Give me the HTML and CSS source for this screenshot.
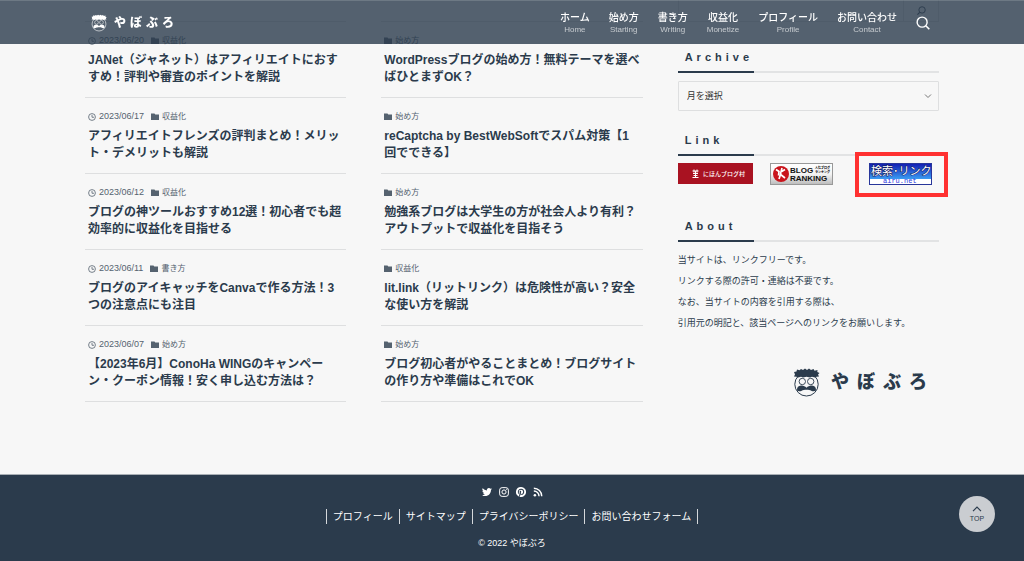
FILE: index.html
```html
<!DOCTYPE html>
<html lang="ja">
<head>
<meta charset="utf-8">
<meta name="viewport" content="width=device-width, initial-scale=1">
<title>やぼぶろ</title>
<link rel="stylesheet" href="styles.css">
</head>
<body>
<svg class="sprite" aria-hidden="true">
  <symbol id="clock" viewBox="0 0 16 16"><circle cx="8" cy="8" r="6.8" fill="none" stroke="currentColor" stroke-width="1.6"/><path d="M8 4v4.500h4" fill="none" stroke="currentColor" stroke-width="1.6"/></symbol>
  <symbol id="folder" viewBox="0 0 16 16"><path d="M0 1h7l1.500 2H16v11H0z" fill="currentColor"/></symbol>
  <symbol id="search" viewBox="0 0 16 16"><circle cx="7" cy="7" r="5.7" fill="none" stroke="currentColor" stroke-width="1.6"/><path d="M11.200 11.200l4 4" stroke="currentColor" stroke-width="1.8"/></symbol>
  <symbol id="face" viewBox="0 0 27 29">
    <circle class="face-skin" cx="13.5" cy="16.3" r="11.7" stroke="currentColor" stroke-width="1"/>
    <path d="M1 4l2.500-.4L4 1.500l2.500.8L8 1l2 1 2-1.500L14 2l2-1.500L18 2l2.500-1 1 1.700 3-.7-.2 2L26.500 5 25 6.500l1 2-2.500.2L22 9.500 19 8.700l-2 .8-3.500-.8-3.500.8-2-.8-3 .8-1.500-.8L1 8.500l1-2z" fill="currentColor"/>
    <circle class="face-lens" cx="9.300" cy="13.500" r="3.200" stroke="currentColor" stroke-width=".9"/>
    <circle class="face-lens" cx="17.700" cy="13.500" r="3.200" stroke="currentColor" stroke-width=".9"/>
    <path d="M4 22.500c-.2-3.400 1.500-4.800 4-5 2.500-.2 4 .8 5.500 2.200 1.500-1.400 3-2.400 5.500-2.200 2.500.2 4.200 1.600 4 5-1.200 1-3 1-4.800.2-1.800-1.200-7.600-1.200-9.400 0-1.800.8-3.600.8-4.800-.2z" fill="currentColor"/>
  </symbol>
</svg>

<header class="header">
  <div class="header-inner">
    <a class="brand" href="#"><svg class="brand-face"><use href="#face"/></svg><span class="brand-name">やぼぶろ</span></a>
    <nav class="nav">
      <a href="#">ホーム<small>Home</small></a>
      <a href="#">始め方<small>Starting</small></a>
      <a href="#">書き方<small>Writing</small></a>
      <a href="#">収益化<small>Monetize</small></a>
      <a href="#">プロフィール<small>Profile</small></a>
      <a href="#">お問い合わせ<small>Contact</small></a>
      <button class="search-button" type="button" aria-label="検索"><svg><use href="#search"/></svg></button>
    </nav>
  </div>
</header>

<main class="content">
  <section class="posts">
    <article class="post">
      <div class="meta"><svg><use href="#clock"/></svg><time>2023/06/20</time><svg><use href="#folder"/></svg><span>収益化</span></div>
      <h2><a href="#">JANet（ジャネット）はアフィリエイトにおすすめ！評判や審査のポイントを解説</a></h2>
    </article>
    <article class="post">
      <div class="meta"><svg><use href="#clock"/></svg><time>2023/06/17</time><svg><use href="#folder"/></svg><span>収益化</span></div>
      <h2><a href="#">アフィリエイトフレンズの評判まとめ！メリット・デメリットも解説</a></h2>
    </article>
    <article class="post">
      <div class="meta"><svg><use href="#clock"/></svg><time>2023/06/12</time><svg><use href="#folder"/></svg><span>収益化</span></div>
      <h2><a href="#">ブログの神ツールおすすめ12選！初心者でも超効率的に収益化を目指せる</a></h2>
    </article>
    <article class="post">
      <div class="meta"><svg><use href="#clock"/></svg><time>2023/06/11</time><svg><use href="#folder"/></svg><span>書き方</span></div>
      <h2><a href="#">ブログのアイキャッチをCanvaで作る方法！3つの注意点にも注目</a></h2>
    </article>
    <article class="post">
      <div class="meta"><svg><use href="#clock"/></svg><time>2023/06/07</time><svg><use href="#folder"/></svg><span>始め方</span></div>
      <h2><a href="#">【2023年6月】ConoHa WINGのキャンペーン・クーポン情報！安く申し込む方法は？</a></h2>
    </article>
  </section>

  <section class="posts">
    <article class="post">
      <div class="meta"><svg><use href="#folder"/></svg><span>始め方</span></div>
      <h2><a href="#">WordPressブログの始め方！無料テーマを選べばひとまずOK？</a></h2>
    </article>
    <article class="post">
      <div class="meta"><svg><use href="#folder"/></svg><span>始め方</span></div>
      <h2><a href="#">reCaptcha by BestWebSoftでスパム対策【1回でできる】</a></h2>
    </article>
    <article class="post">
      <div class="meta"><svg><use href="#folder"/></svg><span>始め方</span></div>
      <h2><a href="#">勉強系ブログは大学生の方が社会人より有利？アウトプットで収益化を目指そう</a></h2>
    </article>
    <article class="post">
      <div class="meta"><svg><use href="#folder"/></svg><span>収益化</span></div>
      <h2><a href="#">lit.link（リットリンク）は危険性が高い？安全な使い方を解説</a></h2>
    </article>
    <article class="post">
      <div class="meta"><svg><use href="#folder"/></svg><span>始め方</span></div>
      <h2><a href="#">ブログ初心者がやることまとめ！ブログサイトの作り方や準備はこれでOK</a></h2>
    </article>
  </section>

  <aside class="sidebar">
    <form class="search-form">
      <input type="search" aria-label="サイト内検索">
      <button type="button" aria-label="検索する"><svg><use href="#search"/></svg></button>
    </form>

    <h2 class="side-title"><label for="archive">Archive</label></h2>
    <div class="select-box">
      <select id="archive"><option>月を選択</option></select>
      <svg viewBox="0 0 8 8"><path d="M1 2.500l3 3 3-3" fill="none" stroke="currentColor"/></svg>
    </div>

    <h2 class="side-title">Link</h2>
    <div class="banners">
      <a class="banner banner-village" href="#">
        <svg viewBox="0 0 75 21">
          <path d="M14.500 8h6M16 6.500v3M19 6.500v3M15 10.500h5M17.500 8v6M14.500 14.500h6M15.500 12.500h4" stroke="#fff" fill="none"/>
          <text class="village-text" x="25" y="13">にほんブログ村</text>
        </svg>
      </a>
      <a class="banner banner-ranking" href="#">
        <svg viewBox="0 0 63 22">
          <defs><linearGradient id="silver" x2="0" y2="1"><stop offset="0" stop-color="#fff"/><stop offset=".5" stop-color="#f4f4f4"/><stop offset="1" stop-color="#bbb"/></linearGradient></defs>
          <rect x=".5" y=".5" width="62" height="21" fill="url(#silver)" stroke="#999"/>
          <circle cx="11" cy="11" r="8" fill="#c9141c"/>
          <path d="M6 6.500l3 2-.5 4M12 5l-1 4 4-2.500M10 11l5 4M11 10l-2 6" stroke="#fff" stroke-width="1.700" fill="none"/>
          <text class="ranking-text" x="20" y="10">BLOG</text>
          <text class="ranking-note" x="45" y="6">人気ブログ</text>
          <text class="ranking-note" x="45" y="10">ランキング</text>
          <text class="ranking-text" x="20" y="18">RANKING</text>
        </svg>
      </a>
      <a class="banner banner-airu" href="#">
        <svg viewBox="0 0 63 22">
          <defs><linearGradient id="blue" x2="0" y2="1"><stop offset="0" stop-color="#1420b4"/><stop offset="1" stop-color="#3a9cf2"/></linearGradient></defs>
          <rect x=".5" y=".5" width="62" height="21" fill="#fff" stroke="#28369a"/>
          <rect x="1" y="1" width="61" height="15" fill="url(#blue)"/>
          <text class="airu-title" x="2" y="12">検索･リンク</text>
          <text class="airu-url" x="14" y="20">airu.net</text>
        </svg>
      </a>
    </div>

    <h2 class="side-title">About</h2>
    <p class="about">当サイトは、リンクフリーです。<br>リンクする際の許可・連絡は不要です。<br>なお、当サイトの内容を引用する際は、<br>引用元の明記と、該当ページへのリンクをお願いします。</p>
    <a class="side-logo" href="#"><svg><use href="#face"/></svg><span>やぼぶろ</span></a>
  </aside>
</main>

<footer class="footer">
  <div class="social">
    <a href="#" aria-label="Twitter"><svg viewBox="0 0 24 24"><path fill="currentColor" d="M23.950 4.600a10 10 0 01-2.800.8 4.900 4.900 0 002.200-2.700 9.900 9.900 0 01-3.100 1.200 4.900 4.900 0 00-8.400 4.500A14 14 0 011.700 3.200a4.900 4.900 0 001.500 6.600 4.900 4.900 0 01-2.200-.6v.1a4.900 4.900 0 003.900 4.800 5 5 0 01-2.200.1 4.900 4.900 0 004.600 3.400A9.900 9.900 0 010 19.500 14 14 0 007.500 21.700c9.100 0 14-7.500 14-14v-.6a10 10 0 002.450-2.500z"/></svg></a>
    <a href="#" aria-label="Instagram"><svg viewBox="0 0 24 24" fill="none" stroke="currentColor" stroke-width="2.400"><rect x="1.500" y="1.500" width="21" height="21" rx="6"/><circle cx="12" cy="12" r="5"/><circle cx="18.200" cy="5.800" r=".6"/></svg></a>
    <a href="#" aria-label="Pinterest"><svg viewBox="0 0 24 24"><path fill="currentColor" d="M12 0a12 12 0 00-4.400 23.200c-.1-.9-.2-2.400 0-3.400l1.400-6s-.3-.7-.3-1.800c0-1.700 1-2.900 2.200-2.900 1 0 1.500.8 1.500 1.700 0 1-.7 2.600-1 4-.3 1.200.6 2.200 1.800 2.200 2.100 0 3.800-2.300 3.800-5.500 0-2.900-2.100-4.900-5-4.900a5.200 5.200 0 00-5.400 5.200c0 1 .4 2.100.9 2.700v.4l-.3 1.300c-.1.200-.2.300-.4.200-1.500-.7-2.400-2.900-2.400-4.700 0-3.800 2.700-7.300 7.900-7.300 4.200 0 7.400 3 7.400 6.900 0 4.100-2.600 7.500-6.200 7.500-1.200 0-2.400-.6-2.700-1.400l-.8 2.900c-.3 1-1 2.300-1.500 3.100A12 12 0 1012 0z"/></svg></a>
    <a href="#" aria-label="RSS"><svg viewBox="0 0 24 24" fill="none" stroke="currentColor" stroke-width="3.400"><circle cx="4.500" cy="19.500" r="3" fill="currentColor" stroke="none"/><path d="M2 9.500A12.500 12.500 0 0114.500 22M2 3a19 19 0 0119 19"/></svg></a>
  </div>
  <nav class="footer-nav">
    <a href="#">プロフィール</a><a href="#">サイトマップ</a><a href="#">プライバシーポリシー</a><a href="#">お問い合わせフォーム</a>
  </nav>
  <p class="copyright">© 2022 やぼぶろ</p>
</footer>

<a class="to-top" href="#"><svg viewBox="0 0 10 6"><path d="M1 5.200l4-4 4 4" fill="none" stroke="currentColor" stroke-width="1.200"/></svg><span>TOP</span></a>
</body>
</html>
```

FILE: styles.css
```css
* {
  box-sizing: border-box;
}

body {
  margin: 0;
  background: #f7f7f7;
  color: #2b3b4c;
  font-family: "Liberation Sans", "Noto Sans CJK JP", sans-serif;
}

a {
  color: inherit;
  text-decoration: none;
}

button {
  padding: 0;
  border: 0;
  background: none;
  color: inherit;
}

svg {
  display: block;
}

.sprite {
  position: absolute;
  width: 0;
  height: 0;
}

.face-skin,
.face-lens {
  fill: none;
}

/* Header */
.header {
  position: fixed;
  z-index: 10;
  top: 0;
  left: 0;
  right: 0;
  height: 44px;
  background: rgba(43, 59, 76, 0.8);
  border-top: 1px solid rgba(255, 255, 255, 0.15);
  color: #fff;
}

.header-inner {
  display: flex;
  justify-content: space-between;
  align-items: center;
  max-width: 854px;
  height: 100%;
  margin: 0 auto;
  padding: 0 9px 0 6px;
}

.brand {
  display: flex;
  align-items: center;
  gap: 7px;
}

.brand-face {
  width: 16px;
  height: 18px;
}

.brand-face,
.side-logo svg {
  flex: none;
}

.brand-name {
  font-size: 12px;
  line-height: 18px;
  font-weight: 900;
  letter-spacing: 4px;
}

.nav {
  display: flex;
  align-items: center;
  gap: 19px;
}

.nav a {
  display: flex;
  flex-direction: column;
  align-items: center;
  padding-top: 1px;
  font-size: 10px;
  line-height: 14px;
  font-weight: 500;
}

.nav small {
  font-size: 8px;
  line-height: 10px;
  font-weight: 400;
  opacity: 0.65;
}

.search-button svg {
  width: 14px;
  height: 14px;
}

/* Main columns */
.content {
  display: grid;
  grid-template-columns: repeat(3, minmax(0, 1fr));
  gap: 35px;
  max-width: 854px;
  margin: 0 auto;
  padding-bottom: 72px;
}

.posts {
  padding-top: 21px;
}

.post {
  padding: 12px 3px 11px;
  border-bottom: 1px solid #dedfe0;
}

.post:first-child {
  border-top: 1px solid #dedfe0;
}

.meta {
  display: flex;
  align-items: center;
  gap: 3px;
  height: 13px;
  margin-bottom: 5px;
  font-size: 8px;
  line-height: 13px;
  color: #55626f;
}

.meta svg {
  width: 8px;
  height: 8px;
}

.meta time {
  margin-right: 4px;
  font-size: 9px;
}

.post h2 {
  margin: 0;
  font-size: 12px;
  line-height: 17px;
  font-weight: 700;
}

/* Sidebar */
.search-form {
  display: flex;
  height: 22px;
  margin-bottom: 27px;
  border: 1px solid #dedfe0;
  border-top: 0;
}

.search-form input {
  flex: 1;
  min-width: 0;
  border: 0;
  background: none;
}

.search-form button {
  display: grid;
  place-items: center;
  width: 35px;
  border-left: 1px solid #dedfe0;
}

.search-form svg {
  width: 9px;
  height: 9px;
  transform: scaleX(-1);
}

.side-title {
  position: relative;
  margin: 0 0 8px;
  padding: 0 7px 5px;
  border-bottom: 2px solid #e2e3e4;
  font-size: 11px;
  line-height: 17px;
  letter-spacing: 4px;
}

.side-title::after {
  content: "";
  position: absolute;
  left: 0;
  bottom: -2px;
  width: 76px;
  height: 2px;
  background: #2b3b4c;
}

.select-box {
  position: relative;
  margin-bottom: 21px;
}

.select-box select {
  display: block;
  width: 100%;
  height: 30px;
  padding: 0 8px;
  border: 1px solid #dedfe0;
  border-radius: 1px;
  background: #f7f7f7;
  color: #333;
  font-family: inherit;
  font-size: 9px;
  appearance: none;
}

.select-box svg {
  position: absolute;
  top: 11px;
  right: 7px;
  width: 8px;
  height: 8px;
  color: #777;
  pointer-events: none;
}

.banners {
  display: flex;
  gap: 17px;
  height: 22px;
  margin: -1px 7px 33px 0;
}

.banner svg {
  width: 63px;
  height: 22px;
}

.banner-village svg {
  width: 75px;
  height: 21px;
  background: #a91221;
}

.village-text {
  font-size: 6px;
  font-weight: 500;
  fill: #fff;
}

.ranking-text {
  font-size: 8px;
  font-weight: 700;
  fill: #111;
}

.ranking-note {
  font-size: 3px;
  font-weight: 900;
  fill: #111;
}

.banner-airu {
  position: relative;
  margin-left: auto;
}

.banner-airu::after {
  content: "";
  position: absolute;
  inset: -11px -16px -12px -14px;
  border: 4px solid #ff3131;
}

.airu-title {
  font-size: 11px;
  fill: #fff;
  stroke: #10185c;
  stroke-width: 1px;
  paint-order: stroke;
}

.airu-url {
  font-family: "Liberation Mono", monospace;
  font-size: 7px;
  fill: #2a36e0;
}

.about {
  margin: 0 0 34px;
  font-size: 9px;
  line-height: 21px;
}

.side-logo {
  display: flex;
  justify-content: flex-end;
  align-items: center;
  gap: 11px;
  padding-right: 4px;
}

.side-logo svg {
  width: 27px;
  height: 29px;
}

.side-logo span {
  font-size: 18px;
  line-height: 29px;
  font-weight: 900;
  letter-spacing: 8px;
  margin-right: -8px;
  padding-right: 8px;
}

/* Footer */
.footer {
  display: flex;
  flex-direction: column;
  align-items: center;
  padding: 12px 0 11px;
  border-top: 1px solid #a9afb5;
  background: #2b3b4c;
  color: #fff;
}

.social {
  display: flex;
  gap: 7px;
  margin-bottom: 12px;
}

.social svg {
  width: 10px;
  height: 10px;
}

.footer-nav {
  display: flex;
  margin-bottom: 12px;
  border-left: 1px solid #d5d8db;
  font-size: 10px;
  line-height: 15px;
}

.footer-nav a {
  padding: 0 6px;
  border-right: 1px solid #d5d8db;
}

.copyright {
  margin: 0;
  font-size: 9px;
  line-height: 14px;
}

.to-top {
  position: fixed;
  right: 29px;
  bottom: 29px;
  display: flex;
  flex-direction: column;
  align-items: center;
  justify-content: center;
  gap: 3px;
  width: 36px;
  height: 36px;
  border-radius: 50%;
  background: #cacdd1;
  font-size: 7px;
  line-height: 8px;
}

.to-top svg {
  width: 10px;
  height: 6px;
}
```
